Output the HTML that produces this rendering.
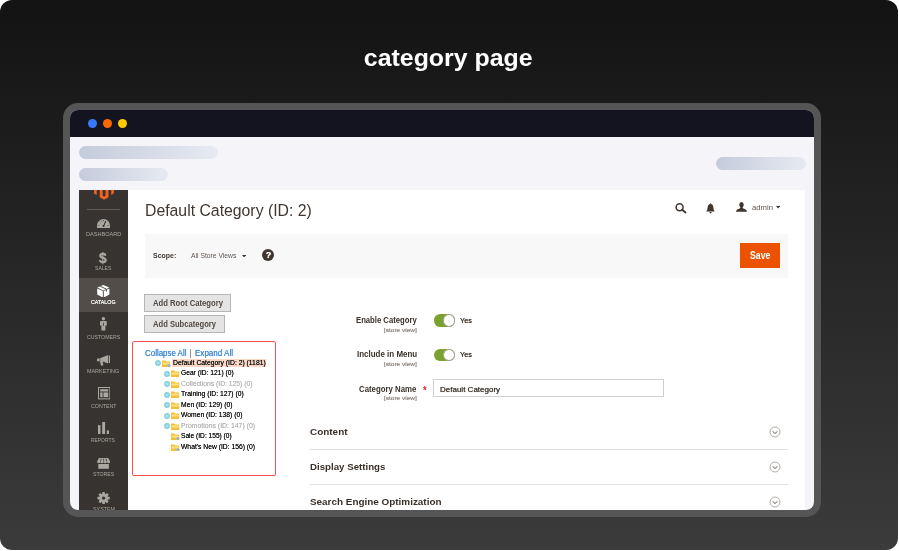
<!DOCTYPE html>
<html lang="en">
<head>
<meta charset="utf-8">
<title>category page</title>
<style>
*{box-sizing:border-box;margin:0;padding:0}
html,body{width:899px;height:551px;background:#fff;overflow:hidden}
body{position:relative;font-family:"Liberation Sans",sans-serif}
.abs,.t{position:absolute}
.t{white-space:nowrap;line-height:1;transform-origin:0 0}
#card{will-change:transform;position:absolute;left:0;top:0;width:898px;height:549.7px;border-radius:12px;background:linear-gradient(180deg,#131313 0%,#3b3b3b 100%);overflow:hidden}
#title{left:0;width:898px;top:47px;text-align:center;font-size:23px;font-weight:700;color:#fff;transform-origin:458px 0;transform:scaleX(1.083)}
#frame{position:absolute;left:63px;top:103px;width:758px;height:414px;border-radius:15px;background:#555}
#inner{position:absolute;left:7px;top:7px;width:744px;height:400px;border-radius:8px;background:#f4f4f9;overflow:hidden}
#bar{position:absolute;left:0;top:0;width:744px;height:27px;background:#141420}
.dot{position:absolute;width:9px;height:9px;border-radius:50%;top:9px}
.pill{position:absolute;height:13px;border-radius:7px;background:linear-gradient(90deg,#c4cbdb,#e7eaf2)}
/* screenshot: origin = inner (70,110); shot at abs (79,190) */
#shot{position:absolute;left:9px;top:80px;width:726px;height:320px;background:#fff;overflow:hidden}
/* inside #shot coordinates are abs-79, abs-190 */
#blur{position:absolute;left:0;top:0;width:726px;height:330px;filter:none}
#shot .t{text-shadow:0 0 .7px currentColor}
#side{position:absolute;left:0;top:0;width:49px;height:320px;background:#373330}
#side .act{position:absolute;left:0;top:88px;width:49px;height:34px;background:#524d49}
#side .lb{position:absolute;left:0;width:49px;text-align:center;font-size:5.6px;line-height:1;color:#aaa6a0;white-space:nowrap}
#side svg{position:absolute}
</style>
</head>
<body>
<div id="card">
  <div class="t" id="title">category page</div>
  <div id="frame"><div id="inner">
    <div id="bar">
      <div class="dot" style="left:18px;background:#3a78fa"></div>
      <div class="dot" style="left:33px;background:#ff6800"></div>
      <div class="dot" style="left:47.5px;background:#ffcb00"></div>
    </div>
    <div class="pill" style="left:9px;top:35.6px;width:139.4px"></div>
    <div class="pill" style="left:9px;top:57.8px;width:89.4px"></div>
    <div class="pill" style="left:645.5px;top:47px;width:90px"></div>
    <div id="shot"><div id="blur">
      <div id="side">
        <div class="act"></div>
        <svg style="left:0;top:0" width="49" height="12" viewBox="0 0 49 12"><g fill="#f26322"><polygon points="15,0 17.7,0 17.7,4.9 15,3.4"/><polygon points="20.7,0 23.7,0 23.7,5.8 25.1,6.6 26.5,5.8 26.5,0 29.5,0 29.5,7.2 25.1,9.8 20.7,7.2"/><polygon points="32.2,0 34.9,0 34.9,3.3 32.2,4.9"/></g></svg>
        <div class="abs" style="left:8px;top:19px;width:33.3px;height:1px;background:#645c57"></div>
        <!-- dashboard -->
        <svg style="left:18px;top:28.8px" width="13" height="9" viewBox="0 0 13 9"><path d="M0,9 V6.5 A6.5,6.5 0 0 1 13,6.5 V9 Z" fill="#aaa6a0"/><path d="M6.5,7.2 L8.6,2.6" stroke="#373330" stroke-width="1.1" stroke-linecap="round"/><circle cx="6.5" cy="7" r="1" fill="#373330"/><g stroke="#373330" stroke-width=".6"><path d="M1.2,6.5h1.3M10.5,6.5h1.3M2.6,2.8l.9,.9M6.5,1v1.2M4.3,1.6l.5,1.1"/></g></svg>
        <!-- sales -->
        <span class="t" style="left:20.4px;top:61.2px;font-size:14.5px;font-weight:700;color:#aaa6a0;transform:scaleX(.95)">$</span>
        <!-- catalog -->
        <svg style="left:18.3px;top:94.8px" width="12.6" height="12.6" viewBox="0 0 12.6 12.6"><polygon points="6.3,0 12.3,2.6 6.3,5.4 0.3,2.6" fill="#fff"/><polygon points="0.2,3.4 5.8,6.1 5.8,12.5 0.2,9.6" fill="#fff"/><polygon points="12.4,3.4 6.8,6.1 6.8,12.5 12.4,9.6" fill="#fff"/><path d="M3.2,1.3 L9.4,4.1 V6.6" stroke="#524d49" stroke-width="1" fill="none"/></svg>
        <!-- customers -->
        <svg style="left:21.2px;top:127px" width="6.8" height="13.6" viewBox="0 0 6.8 13.6"><circle cx="3.4" cy="1.7" r="1.7" fill="#aaa6a0"/><path d="M1.2,3.9 H5.6 Q6.8,3.9 6.8,5.1 V8.6 H5.4 V13.6 H1.4 V8.6 H0 V5.1 Q0,3.9 1.2,3.9 Z" fill="#aaa6a0"/><path d="M3.4,4.4 L4,8.2 L3.4,9 L2.8,8.2 Z" fill="#373330"/></svg>
        <!-- marketing -->
        <svg style="left:18px;top:165.3px" width="13.2" height="10.8" viewBox="0 0 13.2 10.8"><path d="M0,3.4 L2.4,3.4 L11.2,0 L11.2,8.6 L5.6,6.5 L6.4,10.2 L4.1,10.8 L2.9,6.2 L0,6.2 Z" fill="#aaa6a0"/><rect x="11.9" y="0.6" width="1.3" height="7.4" fill="#aaa6a0"/><path d="M2.9,3.4 V6.2" stroke="#373330" stroke-width=".6"/></svg>
        <!-- content -->
        <svg style="left:18.5px;top:197.3px" width="12.4" height="12.4" viewBox="0 0 12.4 12.4"><rect x=".5" y=".5" width="11.4" height="11.4" fill="none" stroke="#aaa6a0" stroke-width="1"/><rect x="2.2" y="2.2" width="8" height="2.3" fill="#aaa6a0"/><rect x="2.2" y="5.4" width="2.4" height="4.8" fill="#aaa6a0"/><rect x="5.5" y="5.4" width="4.7" height="4.8" fill="#aaa6a0"/></svg>
        <!-- reports -->
        <svg style="left:18.9px;top:232px" width="11.4" height="12" viewBox="0 0 11.4 12"><rect x="0" y="3.2" width="2.5" height="8.8" fill="#aaa6a0"/><rect x="4.2" y="0" width="2.9" height="12" fill="#aaa6a0"/><rect x="8.8" y="8.4" width="2.5" height="3.6" fill="#aaa6a0"/></svg>
        <!-- stores -->
        <svg style="left:18px;top:268.4px" width="13.2" height="10.8" viewBox="0 0 13.2 10.8"><path d="M2,0 H11.2 L13.2,3.6 Q13.2,5.2 11.6,5.2 Q10.4,5.2 9.9,4.2 Q9.4,5.2 8.2,5.2 Q7.1,5.2 6.6,4.2 Q6.1,5.2 5,5.2 Q3.8,5.2 3.3,4.2 Q2.8,5.2 1.6,5.2 Q0,5.2 0,3.6 Z" fill="#aaa6a0"/><path d="M1.3,6 H11.9 V10.8 H1.3 Z" fill="#aaa6a0"/><g stroke="#373330" stroke-width=".7"><path d="M4.2,.6 L3.5,3.6 M6.6,.6 V3.6 M9,.6 L9.7,3.6"/></g></svg>
        <!-- system -->
        <svg style="left:18px;top:301.6px" width="13.2" height="12.2" viewBox="-6.6 -6.1 13.2 12.2"><g fill="#aaa6a0"><circle r="4.3"/><rect x="-1.3" y="-6.1" width="2.6" height="12.2" rx=".4"/><rect x="-1.3" y="-6.1" width="2.6" height="12.2" rx=".4" transform="rotate(45)"/><rect x="-1.3" y="-6.1" width="2.6" height="12.2" rx=".4" transform="rotate(90)"/><rect x="-1.3" y="-6.1" width="2.6" height="12.2" rx=".4" transform="rotate(135)"/></g><circle r="1.7" fill="#373330"/></svg>

      </div>
      <!-- header icons -->
      <svg class="abs" style="left:595px;top:11.5px" width="14" height="13" viewBox="0 0 14 13"><circle cx="5.6" cy="5.2" r="3.5" fill="none" stroke="#41362f" stroke-width="1.5"/><path d="M8.2,7.7 L11.5,10.4" stroke="#41362f" stroke-width="1.9" stroke-linecap="round"/></svg>
      <svg class="abs" style="left:627px;top:12.6px" width="9" height="11" viewBox="0 0 9 11"><path d="M4.5,0.2 Q5.2,0.2 5.2,1 Q7.4,1.7 7.4,4.6 Q7.4,7.2 8.8,8.4 H0.2 Q1.6,7.2 1.6,4.6 Q1.6,1.7 3.8,1 Q3.8,0.2 4.5,0.2 Z" fill="#41362f"/><path d="M3.4,9.1 H5.6 Q5.4,10.4 4.5,10.4 Q3.6,10.4 3.4,9.1 Z" fill="#41362f"/></svg>
      <svg class="abs" style="left:656.6px;top:11.7px" width="11" height="9.9" viewBox="0 0 11.4 10.2"><path d="M5.7,0 Q8,0 8,2.6 Q8,4.6 6.9,5.5 Q6.9,6.6 8.2,7 Q11.4,7.8 11.4,10.2 H0 Q0,7.8 3.2,7 Q4.5,6.6 4.5,5.5 Q3.4,4.6 3.4,2.6 Q3.4,0 5.7,0 Z" fill="#41362f"/></svg>
      <svg class="abs" style="left:697px;top:16px" width="4.2" height="2.5" viewBox="0 0 5 3"><path d="M0,0 H5 L2.5,3 Z" fill="#41362f"/></svg>
      <!-- scope bar -->
      <div class="abs" style="left:65.5px;top:44px;width:643.5px;height:43.6px;background:#f8f8f8"></div>
      <svg class="abs" style="left:163px;top:64.6px" width="4.2" height="2.5" viewBox="0 0 5 3"><path d="M0,0 H5 L2.5,3 Z" fill="#41362f"/></svg>
      <div class="abs" style="left:183.1px;top:58.9px;width:12px;height:12px;border-radius:50%;background:#41362f"></div>
      <span class="t" style="left:186.7px;top:60.5px;font-size:9px;font-weight:700;color:#fff">?</span>
      <div class="abs" style="left:661.4px;top:53.1px;width:39.6px;height:25px;background:#eb5202"></div>
      <!-- buttons -->
      <div class="abs" style="left:65.3px;top:104px;width:87px;height:18px;background:#e4e4e4;border:1px solid #b6b6b6"></div>
      <div class="abs" style="left:65.3px;top:125.3px;width:80.4px;height:18px;background:#e4e4e4;border:1px solid #b6b6b6"></div>
      <!-- red highlight box -->
      <div class="abs" style="left:52.85px;top:151.45px;width:143.8px;height:134.5px;border:1.5px solid #fb4d50;border-radius:2px"></div>
      <div class="abs" style="left:93px;top:168.6px;width:94.4px;height:8px;background:#fbd8c6"></div>
      <svg class="abs" style="left:76.4px;top:170.3px" width="6" height="6" viewBox="0 0 6 6"><circle cx="3" cy="3" r="2.9" fill="#7fcfdf"/><path d="M1.4,3H4.6M3,1.4V4.6" stroke="#c9edf3" stroke-width=".8"/></svg>
      <svg class="abs" style="left:83.0px;top:169.7px" width="9.2" height="7.6" viewBox="0 0 9.2 7.6"><path d="M0,0.6 H3.4 L4.1,1.5 H8.2 V7 H0 Z" fill="#f3c03a"/><path d="M0.6,2.4 H7.6 V4.6 H0.6 Z" fill="#fbe07e"/><circle cx="7" cy="5.4" r="1.5" fill="#8db4e8"/><path d="M8,6.5l1,1" stroke="#c9a24a" stroke-width=".7"/></svg>
      <svg class="abs" style="left:85.0px;top:180.7px" width="6" height="6" viewBox="0 0 6 6"><circle cx="3" cy="3" r="2.9" fill="#7fcfdf"/><path d="M1.4,3H4.6M3,1.4V4.6" stroke="#c9edf3" stroke-width=".8"/></svg>
      <svg class="abs" style="left:92.0px;top:180.1px" width="9.2" height="7.6" viewBox="0 0 9.2 7.6"><path d="M0,0.6 H3.4 L4.1,1.5 H8.2 V7 H0 Z" fill="#f3c03a"/><path d="M0.6,2.4 H7.6 V4.6 H0.6 Z" fill="#fbe07e"/></svg>
      <svg class="abs" style="left:85.0px;top:191.1px" width="6" height="6" viewBox="0 0 6 6"><circle cx="3" cy="3" r="2.9" fill="#7fcfdf"/><path d="M1.4,3H4.6M3,1.4V4.6" stroke="#c9edf3" stroke-width=".8"/></svg>
      <svg class="abs" style="left:92.0px;top:190.5px" width="9.2" height="7.6" viewBox="0 0 9.2 7.6"><path d="M0,0.6 H3.4 L4.1,1.5 H8.2 V7 H0 Z" fill="#f3c03a"/><path d="M0.6,2.4 H7.6 V4.6 H0.6 Z" fill="#fbe07e"/></svg>
      <svg class="abs" style="left:85.0px;top:201.7px" width="6" height="6" viewBox="0 0 6 6"><circle cx="3" cy="3" r="2.9" fill="#7fcfdf"/><path d="M1.4,3H4.6M3,1.4V4.6" stroke="#c9edf3" stroke-width=".8"/></svg>
      <svg class="abs" style="left:92.0px;top:201.1px" width="9.2" height="7.6" viewBox="0 0 9.2 7.6"><path d="M0,0.6 H3.4 L4.1,1.5 H8.2 V7 H0 Z" fill="#f3c03a"/><path d="M0.6,2.4 H7.6 V4.6 H0.6 Z" fill="#fbe07e"/></svg>
      <svg class="abs" style="left:85.0px;top:212.3px" width="6" height="6" viewBox="0 0 6 6"><circle cx="3" cy="3" r="2.9" fill="#7fcfdf"/><path d="M1.4,3H4.6M3,1.4V4.6" stroke="#c9edf3" stroke-width=".8"/></svg>
      <svg class="abs" style="left:92.0px;top:211.7px" width="9.2" height="7.6" viewBox="0 0 9.2 7.6"><path d="M0,0.6 H3.4 L4.1,1.5 H8.2 V7 H0 Z" fill="#f3c03a"/><path d="M0.6,2.4 H7.6 V4.6 H0.6 Z" fill="#fbe07e"/></svg>
      <svg class="abs" style="left:85.0px;top:222.7px" width="6" height="6" viewBox="0 0 6 6"><circle cx="3" cy="3" r="2.9" fill="#7fcfdf"/><path d="M1.4,3H4.6M3,1.4V4.6" stroke="#c9edf3" stroke-width=".8"/></svg>
      <svg class="abs" style="left:92.0px;top:222.1px" width="9.2" height="7.6" viewBox="0 0 9.2 7.6"><path d="M0,0.6 H3.4 L4.1,1.5 H8.2 V7 H0 Z" fill="#f3c03a"/><path d="M0.6,2.4 H7.6 V4.6 H0.6 Z" fill="#fbe07e"/></svg>
      <svg class="abs" style="left:85.0px;top:233.1px" width="6" height="6" viewBox="0 0 6 6"><circle cx="3" cy="3" r="2.9" fill="#7fcfdf"/><path d="M1.4,3H4.6M3,1.4V4.6" stroke="#c9edf3" stroke-width=".8"/></svg>
      <svg class="abs" style="left:92.0px;top:232.5px" width="9.2" height="7.6" viewBox="0 0 9.2 7.6"><path d="M0,0.6 H3.4 L4.1,1.5 H8.2 V7 H0 Z" fill="#f3c03a"/><path d="M0.6,2.4 H7.6 V4.6 H0.6 Z" fill="#fbe07e"/></svg>
      <svg class="abs" style="left:92.0px;top:243.1px" width="9.2" height="7.6" viewBox="0 0 9.2 7.6"><path d="M0,0.6 H3.4 L4.1,1.5 H8.2 V7 H0 Z" fill="#f3c03a"/><path d="M0.6,2.4 H7.6 V4.6 H0.6 Z" fill="#fbe07e"/><circle cx="7" cy="5.4" r="1.5" fill="#8db4e8"/><path d="M8,6.5l1,1" stroke="#c9a24a" stroke-width=".7"/></svg>
      <svg class="abs" style="left:92.0px;top:253.7px" width="9.2" height="7.6" viewBox="0 0 9.2 7.6"><path d="M0,0.6 H3.4 L4.1,1.5 H8.2 V7 H0 Z" fill="#f3c03a"/><path d="M0.6,2.4 H7.6 V4.6 H0.6 Z" fill="#fbe07e"/><circle cx="7" cy="5.4" r="1.5" fill="#8db4e8"/><path d="M8,6.5l1,1" stroke="#c9a24a" stroke-width=".7"/></svg>
      <!-- toggles -->
      <div class="abs" style="left:354.6px;top:124px;width:21px;height:12.6px;border-radius:6.3px;background:#79a22e"></div>
      <div class="abs" style="left:363.6px;top:124px;width:12.4px;height:12.6px;border-radius:50%;background:#fff;border:1px solid #a9a39d"></div>
      <div class="abs" style="left:354.6px;top:158.5px;width:21px;height:12.6px;border-radius:6.3px;background:#79a22e"></div>
      <div class="abs" style="left:363.6px;top:158.5px;width:12.4px;height:12.6px;border-radius:50%;background:#fff;border:1px solid #a9a39d"></div>
      <!-- input -->
      <div class="abs" style="left:354px;top:189.3px;width:231.4px;height:18.2px;background:#fff;border:1px solid #d0d0d0"></div>
      <!-- accordion lines -->
      <div class="abs" style="left:231px;top:259px;width:478px;height:1px;background:#e3e3e3"></div>
      <div class="abs" style="left:231px;top:293.6px;width:478px;height:1px;background:#e3e3e3"></div>
      <svg class="abs" style="left:690.4px;top:236.0px" width="12" height="12" viewBox="0 0 12 12"><circle cx="6" cy="6" r="5" fill="#fff" stroke="#b3aea9" stroke-width="1"/><path d="M3.6,5.4 L6,7.6 L8.4,5.4" fill="none" stroke="#8f8882" stroke-width="1.1"/></svg>
      <svg class="abs" style="left:690.4px;top:271.0px" width="12" height="12" viewBox="0 0 12 12"><circle cx="6" cy="6" r="5" fill="#fff" stroke="#b3aea9" stroke-width="1"/><path d="M3.6,5.4 L6,7.6 L8.4,5.4" fill="none" stroke="#8f8882" stroke-width="1.1"/></svg>
      <svg class="abs" style="left:690.4px;top:306.0px" width="12" height="12" viewBox="0 0 12 12"><circle cx="6" cy="6" r="5" fill="#fff" stroke="#b3aea9" stroke-width="1"/><path d="M3.6,5.4 L6,7.6 L8.4,5.4" fill="none" stroke="#8f8882" stroke-width="1.1"/></svg>

      <span class="t" style="left:7.00px;top:41.00px;font-size:6px;font-weight:400;color:#aaa6a0;text-shadow:none;transform:scaleX(0.9286)">DASHBOARD</span>
      <span class="t" style="left:16.40px;top:75.00px;font-size:6px;font-weight:400;color:#aaa6a0;text-shadow:none;transform:scaleX(0.8471)">SALES</span>
      <span class="t" style="left:11.90px;top:109.00px;font-size:6px;font-weight:400;color:#ffffff;transform:scaleX(0.8850)">CATALOG</span>
      <span class="t" style="left:7.80px;top:144.00px;font-size:6px;font-weight:400;color:#aaa6a0;text-shadow:none;transform:scaleX(0.8683)">CUSTOMERS</span>
      <span class="t" style="left:8.30px;top:178.00px;font-size:6px;font-weight:400;color:#aaa6a0;text-shadow:none;transform:scaleX(0.9027)">MARKETING</span>
      <span class="t" style="left:11.50px;top:213.00px;font-size:6px;font-weight:400;color:#aaa6a0;text-shadow:none;transform:scaleX(0.8759)">CONTENT</span>
      <span class="t" style="left:12.30px;top:247.00px;font-size:6px;font-weight:400;color:#aaa6a0;text-shadow:none;transform:scaleX(0.8199)">REPORTS</span>
      <span class="t" style="left:14.00px;top:281.00px;font-size:6px;font-weight:400;color:#aaa6a0;text-shadow:none;transform:scaleX(0.8631)">STORES</span>
      <span class="t" style="left:13.50px;top:316.00px;font-size:6px;font-weight:400;color:#aaa6a0;text-shadow:none;transform:scaleX(0.8917)">SYSTEM</span>
      <span class="t" style="left:66.40px;top:12.00px;font-size:17.2px;font-weight:400;color:#41362f;text-shadow:none;transform:scaleX(0.9190)">Default Category (ID: 2)</span>
      <span class="t" style="left:672.50px;top:14.00px;font-size:7.6px;font-weight:400;color:#5f5650;text-shadow:none;transform:scaleX(1.0103)">admin</span>
      <span class="t" style="left:73.80px;top:62.00px;font-size:7.8px;font-weight:700;color:#41362f;text-shadow:none;transform:scaleX(0.8923)">Scope:</span>
      <span class="t" style="left:111.70px;top:62.00px;font-size:7.8px;font-weight:400;color:#5f5650;text-shadow:none;transform:scaleX(0.8662)">All Store Views</span>
      <span class="t" style="left:670.50px;top:61.00px;font-size:10px;font-weight:700;color:#ffffff;text-shadow:none;transform:scaleX(0.8690)">Save</span>
      <span class="t" style="left:74.00px;top:110.00px;font-size:8.2px;font-weight:700;color:#514943;text-shadow:none;transform:scaleX(0.9382)">Add Root Category</span>
      <span class="t" style="left:74.00px;top:131.00px;font-size:8.2px;font-weight:700;color:#514943;text-shadow:none;transform:scaleX(0.9292)">Add Subcategory</span>
      <span class="t" style="left:66.00px;top:160.00px;font-size:8.2px;font-weight:400;color:#3f8ad6;transform:scaleX(0.9677)">Collapse All</span>
      <span class="t" style="left:110.60px;top:160.00px;font-size:8.2px;font-weight:400;color:#6b625c;transform:scaleX(0.6540)">|</span>
      <span class="t" style="left:116.00px;top:160.00px;font-size:8.2px;font-weight:400;color:#3f8ad6;transform:scaleX(0.9818)">Expand All</span>
      <span class="t" style="left:93.90px;top:169.00px;font-size:8px;font-weight:400;color:#151515;transform:scaleX(0.8486)">Default Category (ID: 2) (1181)</span>
      <span class="t" style="left:101.90px;top:179.00px;font-size:8px;font-weight:400;color:#151515;transform:scaleX(0.8346)">Gear (ID: 121) (0)</span>
      <span class="t" style="left:101.90px;top:190.00px;font-size:8px;font-weight:400;color:#b8b8b8;transform:scaleX(0.8463)">Collections (ID: 125) (0)</span>
      <span class="t" style="left:101.90px;top:200.00px;font-size:8px;font-weight:400;color:#151515;transform:scaleX(0.8478)">Training (ID: 127) (0)</span>
      <span class="t" style="left:101.90px;top:211.00px;font-size:8px;font-weight:400;color:#151515;transform:scaleX(0.8456)">Men (ID: 129) (0)</span>
      <span class="t" style="left:101.90px;top:221.00px;font-size:8px;font-weight:400;color:#151515;transform:scaleX(0.8452)">Women (ID: 138) (0)</span>
      <span class="t" style="left:101.90px;top:232.00px;font-size:8px;font-weight:400;color:#b8b8b8;transform:scaleX(0.8635)">Promotions (ID: 147) (0)</span>
      <span class="t" style="left:101.90px;top:242.00px;font-size:8px;font-weight:400;color:#151515;transform:scaleX(0.8263)">Sale (ID: 155) (0)</span>
      <span class="t" style="left:101.90px;top:253.00px;font-size:8px;font-weight:400;color:#151515;transform:scaleX(0.8441)">What's New (ID: 156) (0)</span>
      <span class="t" style="left:277.00px;top:127.00px;font-size:8.2px;font-weight:700;color:#3a302a;text-shadow:none;transform:scaleX(0.9395)">Enable Category</span>
      <span class="t" style="left:277.50px;top:161.00px;font-size:8.2px;font-weight:700;color:#3a302a;text-shadow:none;transform:scaleX(0.9729)">Include in Menu</span>
      <span class="t" style="left:280.30px;top:196.00px;font-size:8.2px;font-weight:700;color:#3a302a;text-shadow:none;transform:scaleX(0.9554)">Category Name</span>
      <span class="t" style="left:305.00px;top:138.00px;font-size:5.6px;font-weight:400;color:#8d8680;transform:scaleX(1.1556)">[store view]</span>
      <span class="t" style="left:305.00px;top:172.00px;font-size:5.6px;font-weight:400;color:#8d8680;transform:scaleX(1.1556)">[store view]</span>
      <span class="t" style="left:305.00px;top:206.00px;font-size:5.6px;font-weight:400;color:#8d8680;transform:scaleX(1.1556)">[store view]</span>
      <span class="t" style="left:343.60px;top:196.00px;font-size:10px;font-weight:700;color:#e22626;text-shadow:none;transform:scaleX(0.9216)">*</span>
      <span class="t" style="left:380.60px;top:127.00px;font-size:7.6px;font-weight:400;color:#41362f;transform:scaleX(0.9604)">Yes</span>
      <span class="t" style="left:380.60px;top:161.00px;font-size:7.6px;font-weight:400;color:#41362f;transform:scaleX(0.9604)">Yes</span>
      <span class="t" style="left:361.10px;top:196.00px;font-size:7.6px;font-weight:400;color:#41362f;transform:scaleX(1.0547)">Default Category</span>
      <span class="t" style="left:231.00px;top:237.00px;font-size:9.6px;font-weight:700;color:#3a302a;text-shadow:none;transform:scaleX(1.0349)">Content</span>
      <span class="t" style="left:231.00px;top:272.00px;font-size:9.6px;font-weight:700;color:#3a302a;text-shadow:none;transform:scaleX(1.0102)">Display Settings</span>
      <span class="t" style="left:231.00px;top:307.00px;font-size:9.6px;font-weight:700;color:#3a302a;text-shadow:none;transform:scaleX(1.0321)">Search Engine Optimization</span>
    </div></div>
  </div></div>
</div>
</body>
</html>
